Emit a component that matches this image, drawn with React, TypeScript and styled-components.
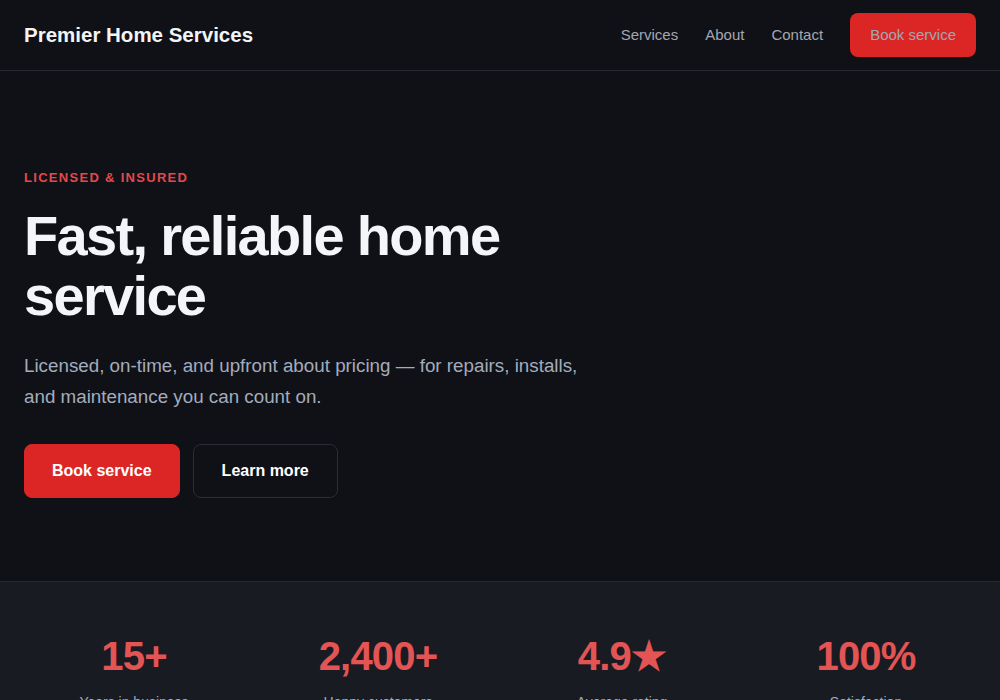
import styled, { createGlobalStyle } from "styled-components";

const stats = [
  { value: "15+", label: "Years in business" },
  { value: "2,400+", label: "Happy customers" },
  { value: "4.9★", label: "Average rating" },
  { value: "100%", label: "Satisfaction" },
];

const App = () => {
  return (
    <Page>
      <GlobalStyle />
      <Header>
        <Logo>Premier Home Services</Logo>
        <Nav>
          <NavLink href="#services">Services</NavLink>
          <NavLink href="#about">About</NavLink>
          <NavLink href="#contact">Contact</NavLink>
          <NavButton>Book service</NavButton>
        </Nav>
      </Header>

      <Hero>
        <Eyebrow>Licensed &amp; insured</Eyebrow>
        <Title>Fast, reliable home service</Title>
        <Lead>
          Licensed, on-time, and upfront about pricing — for repairs, installs,
          and maintenance you can count on.
        </Lead>
        <Actions>
          <Button variant="primary">Book service</Button>
          <Button variant="ghost">Learn more</Button>
        </Actions>
      </Hero>

      <Stats>
        {stats.map((s) => (
          <Stat key={s.label}>
            <StatValue>{s.value}</StatValue>
            <StatLabel>{s.label}</StatLabel>
          </Stat>
        ))}
      </Stats>
    </Page>
  );
};

const GlobalStyle = createGlobalStyle`
  html, body {
    margin: 0;
    background: #101116;
  }
  body {
    font-family: "Liberation Sans", Arial, sans-serif;
    color: #f3f4f6;
  }
  * {
    box-sizing: border-box;
  }
`;

const Page = styled.div`
  min-height: 700px;
  background: #101116;
`;

const Header = styled.header`
  height: 71px;
  padding: 0 24px 1px;
  display: flex;
  align-items: center;
  justify-content: space-between;
  border-bottom: 1px solid #262832;
`;

const Logo = styled.div`
  font-size: 20.5px;
  font-weight: 700;
  color: #f3f4f6;
`;

const Nav = styled.nav`
  display: flex;
  align-items: center;
  gap: 27px;
`;

const NavLink = styled.a`
  font-size: 15px;
  color: #a3a7b1;
  text-decoration: none;
`;

const NavButton = styled.button`
  height: 44px;
  padding: 0 20px;
  border: none;
  border-radius: 8px;
  background: #dc2626;
  color: #a3a7b1;
  font-family: inherit;
  font-size: 15px;
`;

const Hero = styled.section`
  padding: 99px 24px 83px;
  border-bottom: 1px solid #262832;
`;

const Eyebrow = styled.div`
  font-size: 13px;
  font-weight: 700;
  letter-spacing: 0.1em;
  text-transform: uppercase;
  color: #e5484d;
  line-height: 16px;
`;

const Title = styled.h1`
  margin: 20px 0 0;
  max-width: 600px;
  font-size: 56px;
  line-height: 60px;
  font-weight: 700;
  letter-spacing: -0.03em;
  color: #f4f5f8;
`;

const Lead = styled.p`
  margin: 24px 0 0;
  max-width: 580px;
  font-size: 18.8px;
  line-height: 31px;
  color: #a3acbd;
`;

const Actions = styled.div`
  margin-top: 32px;
  display: flex;
  gap: 13px;
`;

const Button = styled.button<{ variant: "primary" | "ghost" }>`
  height: 54px;
  padding: 0 ${(p) => (p.variant === "primary" ? "27px" : "28px")};
  border-radius: 8px;
  font-family: inherit;
  font-size: 16px;
  font-weight: 700;
  color: #ffffff;
  background: ${(p) => (p.variant === "primary" ? "#dc2626" : "#101116")};
  border: 1px solid
    ${(p) => (p.variant === "primary" ? "#dc2626" : "#2a2d36")};
`;

const Stats = styled.section`
  background: #181b22;
  padding: 50px 24px 40px;
  display: grid;
  grid-template-columns: repeat(4, 1fr);
  gap: 24px;
`;

const Stat = styled.div`
  text-align: center;
`;

const StatValue = styled.div`
  font-size: 40px;
  line-height: 48px;
  font-weight: 700;
  color: #e35454;
  letter-spacing: -0.02em;
`;

const StatLabel = styled.div`
  margin-top: 14px;
  font-size: 14px;
  color: #a3acbd;
`;

export default App;
